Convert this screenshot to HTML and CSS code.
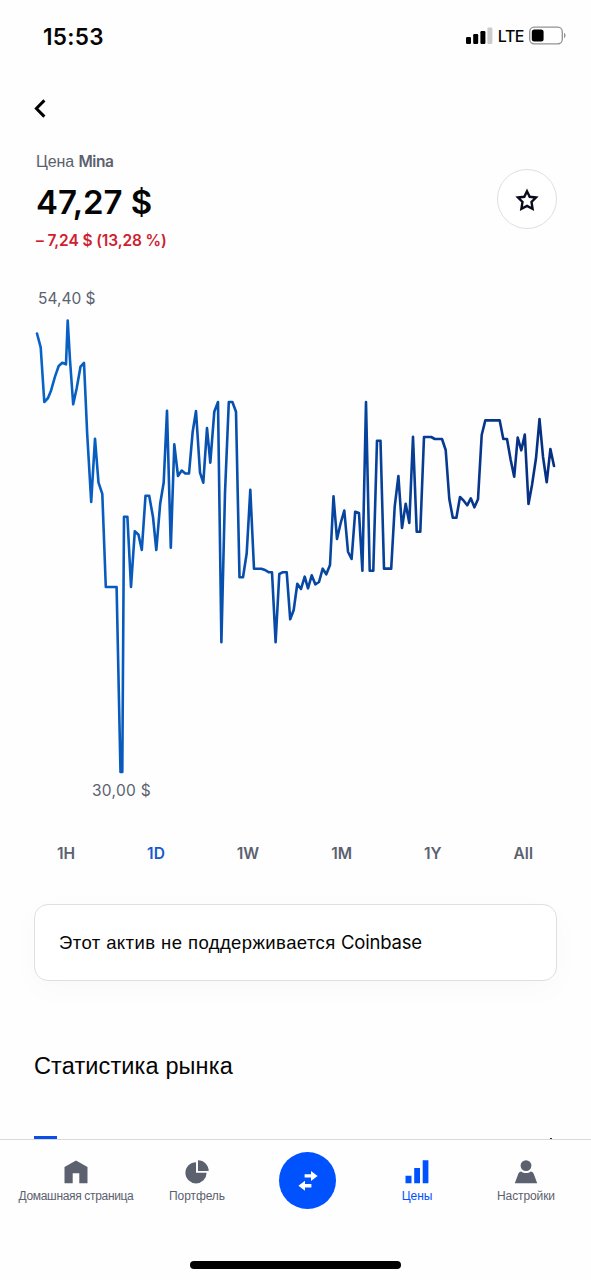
FILE: index.html
```html
<!DOCTYPE html>
<html lang="ru">
<head>
<meta charset="utf-8">
<title>Mina</title>
<link rel="stylesheet" href="styles.css">
</head>
<body>
<div class="screen">
  <header class="status">
    <span class="clock">15:53</span>
    <div class="status-right">
      <svg class="signal" width="27" height="18" viewBox="0 0 27 18"><rect x="0" y="10" width="5" height="7" rx="1.2"/><rect x="7.2" y="7" width="5" height="10" rx="1.2"/><rect x="14.4" y="4" width="5" height="13" rx="1.2"/><rect x="21.4" y="0.5" width="5" height="16.5" rx="1.2" fill="#ccc"/></svg>
      <span class="network">LTE</span>
      <svg class="battery" width="38" height="20" viewBox="0 0 38 20"><rect x="0.7" y="1.2" width="32.6" height="16.6" rx="4.5" fill="none" stroke="#929292" stroke-width="1.3"/><rect x="2.8" y="3.4" width="11.8" height="12.2" rx="2.5"/><path d="M35 7c2 .6 2 4.4 0 5z" fill="#929292"/></svg>
    </div>
  </header>
  <nav class="back"><svg width="12" height="20" viewBox="0 0 12 20"><path d="M10.4 1.4 2.4 9.5 10.4 17.6" fill="none" stroke="#000" stroke-width="3"/></svg></nav>
  <section class="price">
    <div>
      <div class="label"><span class="cyr">Цена</span> <b>Mina</b></div>
      <div class="amount">47,27 $</div>
      <div class="change">– 7,24 $ (13,28 %)</div>
    </div>
    <button class="star" aria-label="Избранное"><svg width="24" height="24" viewBox="0 0 24 24"><path d="M12 3.3 14.7 8.8 21 9.5 16.5 13.9 17.6 20.9 12 17.9 6.4 20.9 7.5 13.9 3 9.5 9.3 8.8Z" fill="none" stroke="#0a0b1a" stroke-width="2.4"/></svg></button>
  </section>
  <div class="high">54,40 $</div>
  <svg class="chart" width="591" height="466" viewBox="0 313 591 466">
    <defs><linearGradient id="line" gradientUnits="userSpaceOnUse" x1="37" y1="0" x2="554" y2="0"><stop offset="0" stop-color="#0863c8"/><stop offset="1" stop-color="#062f82"/></linearGradient></defs>
    <polyline fill="none" stroke="url(#line)" stroke-width="2.6" stroke-linejoin="round" stroke-linecap="round" points="37,333.5 40.7,347.3 44.3,402 48,398 51,390.7 55,376.7 58.7,366 62.3,362.7 66,364.3 67.7,320.5 70,360 73.2,404.3 76.7,388.3 80.5,366.7 84,363 87.2,434 91.2,502 95,438.7 98.5,482.7 102.3,493.8 105.8,587 116.6,587 120.5,772 122.3,772 124,516.8 127.4,516.8 131,587 134.8,531.2 138.5,534.7 141.8,550 145.5,495.8 149.2,495.8 153,517 156.3,550 160.2,503.5 163.7,482.5 167,410.7 170.8,547.7 174.3,444.3 178,476 181.7,470.5 185.3,473.5 189,473.5 192.7,431.7 196,411 200,472.7 203.3,482.7 207,428 210.3,462.7 214.3,411.7 218,402 221.4,642.3 225,493 228.8,402 232.4,402 236,411.7 239.5,577.3 243,577.3 246.7,553.3 250.3,489.9 254,568.7 261.3,568.7 265,570 268.5,572.2 272,572.2 275.6,642.3 279.3,574 283,572.2 286.7,572.2 290.2,619.3 293.7,610 297.3,583.7 301,589 304.7,576.7 308,588.3 311.7,575.3 315.3,584.3 319,582 322.7,568.7 326.3,574.3 330,565 333.5,496.4 337,539 340.7,523 344.3,510.5 348,551.7 351.6,559 355.2,511.7 359,513 362.4,570.7 366,402 369.7,570.7 373.3,570.7 377,440.7 380.5,440.7 384,568.6 391.2,568.6 394.7,506.7 398.4,476 402,528 405.7,503.7 409.3,523 413,436.9 416.7,531.7 420.3,531.7 424,437 431.2,437 434.8,439 442,439 445.7,450 449.3,499 452.8,517.7 456.4,517.7 460,497 463.7,500.7 467.2,505.3 470.8,498.3 474.4,507.3 478,499.3 481.7,435 485.3,420.4 499.7,420.4 503.3,439 507,439 510.7,460 514.2,476.8 517.7,437.5 521.3,450.3 524.8,434.5 528.5,504 532,485 536,458.3 539.5,419 543,456.7 546.7,482.3 550.4,449 554,466"/>
  </svg>
  <div class="low">30,00 $</div>
  <nav class="ranges"><span>1H</span><span class="on">1D</span><span>1W</span><span>1M</span><span>1Y</span><span>All</span></nav>
  <div class="card"><span class="cyr notice">Этот актив не поддерживается</span> <span class="brand">Coinbase</span></div>
  <h2 class="heading">Статистика рынка</h2>
  <div class="peek"><i class="peek-mark"></i><i class="peek-dot"></i></div>
  <footer class="tabs">
    <a class="tab t1"><svg width="24" height="24" viewBox="0 0 24 24"><path d="M.5 7 12 .4 23.5 7V23.3H15.3V13.3H8.7V23.3H.5Z"/></svg><span>Домашнаяя страница</span></a>
    <a class="tab t2"><svg width="24" height="24" viewBox="0 0 24 24"><path d="M11 2.2V12.8H21.6A10.6 10.6 0 1 1 11 2.2Z"/><path d="M13 .3A10.7 10.7 0 0 1 23.7 11H13Z"/></svg><span>Портфель</span></a>
    <a class="trade"><svg width="20" height="20" viewBox="0 0 20 20"><path fill="#fff" d="M6.6 3.3H13V0L19.6 4.9 13 9.9V6.6H6.6ZM13.4 13H7V9.8L.4 14.8 7 19.7V16.4H13.4Z"/></svg></a>
    <a class="tab t3"><svg width="24" height="24" viewBox="0 0 24 24"><path d="M.5 15.7H6.5V23.2H.5ZM9.2 8H15V23.2H9.2ZM17.7.3H23.4V23.2H17.7Z"/></svg><span>Цены</span></a>
    <a class="tab t4"><svg width="24" height="24" viewBox="0 0 24 24"><circle cx="12" cy="5.6" r="5.4"/><path d="M.8 23.2 4.2 14C4.8 12.3 5.8 11.6 7.2 11.4 9.8 13.6 14.2 13.6 16.8 11.4 18.2 11.6 19.2 12.3 19.8 14L23.2 23.2Z"/></svg><span>Настройки</span></a>
  </footer>
  <div class="home"></div>
</div>
</body>
</html>
```
FILE: styles.css
```css
* { box-sizing: border-box; }
body { margin: 0; background: #fff; }
.screen { width: 591px; height: 1280px; overflow: hidden; display: flex; flex-direction: column; font-family: Inter, "Liberation Sans", sans-serif; color: #050505; background: #fefefe; }
.screen > * { flex: none; }
.cyr { font-family: "Liberation Sans", sans-serif; }
svg { display: block; }
.status { height: 72px; padding: 0 24px 0 43px; display: flex; justify-content: space-between; align-items: center; }
.clock { font-size: 22.5px; font-weight: 600; letter-spacing: .3px; }
.status-right { display: flex; align-items: center; }
.network { font-size: 16px; margin: 0 5px; font-weight: 500; letter-spacing: -.5px; }
.back { height: 75px; padding: 27px 0 0 34px; }
.price { height: 137px; padding: 4px 34px 0 36px; display: flex; justify-content: space-between; }
.label { height: 20px; line-height: 21px; font-size: 15.5px; color: #5b616e; white-space: nowrap; }
.label .cyr { font-size: 16px; letter-spacing: -.1px; }
.label b { font-weight: 600; letter-spacing: -.4px; }
.amount { height: 62px; line-height: 62px; font-size: 33px; font-weight: 600; letter-spacing: -.1px; }
.change { height: 16px; line-height: 16px; font-size: 15.5px; font-weight: 600; letter-spacing: -.12px; color: #cf202f; white-space: nowrap; }
.star { width: 60px; height: 60px; margin-top: 18px; padding: 2px 0 0; border: 1.5px solid #dedfe1; border-radius: 50%; background: #fff; display: flex; align-items: center; justify-content: center; }
.high, .low { font-size: 15.5px; line-height: 30px; font-weight: 400; color: #5b616e; }
.high { height: 29px; padding-left: 38px; }
.chart { height: 466px; }
.low { height: 58px; line-height: 24px; padding-left: 92px; letter-spacing: .3px; }
.ranges { height: 68px; padding: 7px 58px 0 57px; display: flex; justify-content: space-between; font-size: 15.5px; line-height: 20px; font-weight: 600; color: #5b616e; }
.ranges .on { color: #1659cf; }
.card { height: 77px; margin: -1px 34px 0; padding: 0 24px; border: 1.5px solid #dedfe1; border-radius: 14px; background: #fff; box-shadow: 0 8px 32px rgba(0,0,0,.022); font-size: 18.5px; line-height: 74px; white-space: nowrap; }
.notice { letter-spacing: .42px; }
.brand { font-weight: 400; letter-spacing: -.2px; }
.heading { height: 30px; margin: 70px 0 0 34px; font: 400 23.5px/31px "Liberation Sans", sans-serif; letter-spacing: .13px; }
.peek { height: 58px; padding: 0 39px 0 34px; display: flex; align-items: flex-end; justify-content: space-between; }
.peek-mark { width: 23px; height: 3px; background: #0b4fe8; }
.peek-dot { width: 2px; height: 1px; background: #333; }
.tabs { height: 122px; border-top: 1.5px solid #d8d9dc; display: flex; align-items: flex-start; color: #5b616e; }
.tab { display: flex; flex-direction: column; align-items: center; gap: 5px; padding-top: 20px; font: 12px/14px "Liberation Sans", sans-serif; letter-spacing: -.1px; fill: currentColor; white-space: nowrap; }
.t1 { width: 152px; letter-spacing: -.33px; } .t2 { width: 90px; } .t3 { width: 90px; margin-left: 36px; } .t4 { width: 90px; margin-left: 19px; }
.t3 { color: #0052ff; }
.trade { width: 57px; height: 57px; margin: 12px 0 0 37px; border-radius: 50%; background: #0052ff; display: flex; align-items: center; justify-content: center; }
.home { width: 211px; height: 8px; margin-left: 190px; border-radius: 4px; background: #000; }
```
